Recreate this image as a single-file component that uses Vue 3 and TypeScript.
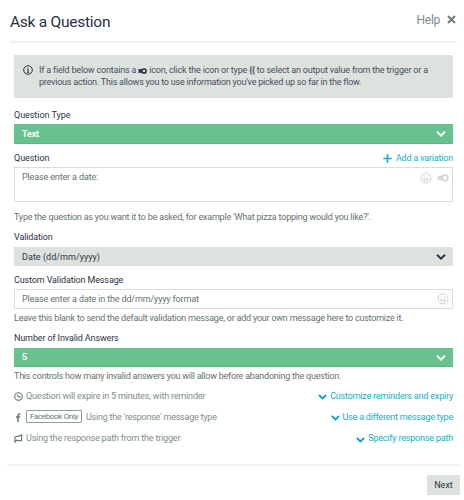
<script setup lang="ts">
interface Option {
  icon: 'clock' | 'facebook' | 'flag'
  badge?: string
  text: string
  link: string
}

const options: Option[] = [
  { icon: 'clock', text: 'Question will expire in 5 minutes, with reminder', link: 'Customize reminders and expiry' },
  { icon: 'facebook', badge: 'Facebook Only', text: "Using the 'response' message type", link: 'Use a different message type' },
  { icon: 'flag', text: 'Using the response path from the trigger', link: 'Specify response path' },
]
</script>

<template>
  <div class="dialog">
    <header class="header">
      <h1 class="title">Ask a Question</h1>
      <span class="help">Help</span>
      <svg class="close" viewBox="0 0 9 9"><path d="M1 1l7 7M8 1l-7 7" /></svg>
    </header>

    <main class="body">
      <section class="info">
        <svg class="info-icon" viewBox="0 0 10 10">
          <circle cx="5" cy="5" r="4.3" /><path d="M4.2 4.4h1v2.9M4 7.3h2.2M5 2.4v1" />
        </svg>
        <div class="info-text">
          <div class="line-one">If a field below contains a <svg class="inline-xo" viewBox="0 0 9 6"><path d="M.6 1.2L3.4 4.8M.6 4.8L3.4 1.2" /><circle cx="6" cy="3" r="2.1" /></svg> icon, click the icon or type <b>{{ '{' + '{' }}</b> to select an output value from the trigger or a</div>
          <div class="line-two">previous action. This allows you to use information you've picked up so far in the flow.</div>
        </div>
      </section>

      <div class="label first"><span class="l-type">Question Type</span></div>
      <div class="select green">
        <span>Text</span>
        <svg class="chevron" viewBox="0 0 10 6"><path d="M1 .8l4 3.8L9 .8" /></svg>
      </div>

      <div class="label question">
        <span class="l-type">Question</span>
        <a class="link add"><svg class="plus" viewBox="0 0 9 9"><path d="M4.5 .3v8.4M.3 4.5h8.4" /></svg><span>Add a variation</span></a>
      </div>
      <div class="field area">
        <span>Please enter a date:</span>
        <div class="tools">
          <svg class="smile" viewBox="0 0 12 12"><circle cx="6" cy="6" r="5" /><path d="M3.3 6.8c.5 2.5 4.9 2.5 5.4 0zM4.3 3.5v1.4M7.7 3.5v1.4" /></svg>
          <svg class="xo" viewBox="0 0 12 8"><path d="M.8 1.7l3.6 4.6M.8 6.3l3.6-4.6" /><circle cx="8" cy="4" r="2.9" /></svg>
        </div>
      </div>
      <div class="hint after-area"><span>Type the question as you want it to be asked, for example 'What pizza topping would you like?'.</span></div>

      <div class="label validation"><span>Validation</span></div>
      <div class="select grey">
        <span>Date (dd/mm/yyyy)</span>
        <svg class="chevron" viewBox="0 0 10 6"><path d="M1 .8l4 3.8L9 .8" /></svg>
      </div>

      <div class="label custom"><span>Custom Validation Message</span></div>
      <div class="field single">
        <span>Please enter a date in the dd/mm/yyyy format</span>
        <svg class="smile" viewBox="0 0 12 12"><circle cx="6" cy="6" r="5" /><path d="M3.3 6.8c.5 2.5 4.9 2.5 5.4 0zM4.3 3.5v1.4M7.7 3.5v1.4" /></svg>
      </div>
      <div class="hint"><span>Leave this blank to send the default validation message, or add your own message here to customize it.</span></div>

      <div class="label number"><span>Number of Invalid Answers</span></div>
      <div class="select green short">
        <span>5</span>
        <svg class="chevron" viewBox="0 0 10 6"><path d="M1 .8l4 3.8L9 .8" /></svg>
      </div>
      <div class="hint"><span class="h-controls">This controls how many invalid answers you will allow before abandoning the question.</span></div>

      <div class="options">
        <div v-for="o in options" :key="o.icon" class="option" :class="o.icon">
          <svg v-if="o.icon === 'clock'" class="option-icon" viewBox="0 0 9 9"><circle cx="4.5" cy="4.5" r="3.8" /><path d="M3 2.8l1.6 2h2" /></svg>
          <svg v-else-if="o.icon === 'facebook'" class="option-icon" viewBox="0 0 9 9"><path d="M6.3 1H5.5C4.3 1 4 1.6 4 2.6V9M2 4h4.1" class="thick" /></svg>
          <svg v-else class="option-icon" viewBox="0 0 9 9"><path d="M.9 8.2V3.1L2.8 2.3l1.1.3L7.6 1v5.6H4.4L2.6 6.2.9 8.2z" /></svg>
          <span v-if="o.badge" class="badge">{{ o.badge }}</span>
          <span class="option-text">{{ o.text }}</span>
          <a class="link"><svg class="chevron" viewBox="0 0 10 6"><path d="M1 .8l4 3.8L9 .8" /></svg><span>{{ o.link }}</span></a>
        </div>
      </div>
    </main>

    <footer class="footer"><button class="next" type="button">Next</button></footer>
  </div>
</template>

<style>
body { margin: 0; background: #fff; }
</style>

<style scoped>
* { box-sizing: border-box; }
svg { fill: none; stroke: currentColor; flex: none; display: block; }
.dialog { width: 464px; height: 500px; background: #fff; font: 9px/12px Roboto, "Liberation Sans", sans-serif; letter-spacing: -0.2px; color: #2c3644; white-space: nowrap; overflow: hidden; }
.header { height: 43px; margin: 0 7px 0 10px; border-bottom: 2px solid #edf1f0; display: flex; align-items: center; color: #7b8c8b; }
.title { margin: 2px auto 0 0; font-size: 15.5px; line-height: 20px; font-weight: 400; letter-spacing: -0.25px; color: #27313f; }
.help { font-size: 12px; margin-right: 7px; margin-top: -2px; letter-spacing: -0.3px; }
.close { width: 9px; height: 9px; stroke-width: 1.9; margin: -3px 1px 0 0; color: #6c7c7b; }
.body { padding: 12px 11px 0 14px; height: 421px; }
.info { height: 43px; padding: 9px 9px 0; background: #dde2df; border-radius: 1px; display: flex; color: #46505e; }
.line-one { letter-spacing: -0.19px; }
.line-two { letter-spacing: -0.22px; }
.info-icon { width: 10px; height: 10px; margin: 1px 6px 0 0; color: #27313f; }
.inline-xo { display: inline-block; width: 9px; height: 6px; stroke-width: 1.5; color: #1f2937; vertical-align: -1px; }
.label { height: 18px; display: flex; align-items: center; justify-content: space-between; letter-spacing: -0.13px; color: #2b3543; }
.l-type { letter-spacing: -0.05px; }
.first { margin-top: 8px; }
.question { margin-top: 5px; }
.validation { margin: 2px 0 1px; }
.custom { margin-top: 5px; }
.number { margin: 2px 0 1px; }
.select { display: flex; align-items: center; justify-content: space-between; padding: 0 7px 0 8px; height: 20px; }
.green { background: #68c18f; color: #fff; font-weight: 700; border-bottom: 1px solid #59b982; }
.grey { background: #dde2df; height: 19px; letter-spacing: 0.04px; }
.short { height: 19px; margin-top: 1px; }
.chevron { width: 10px; height: 6px; stroke-width: 2; margin-top: 1px; }
.link { color: #12b0c9; display: flex; align-items: center; margin-left: auto; letter-spacing: -0.19px; }
.link .chevron { width: 9px; margin: 3px 3px 0 0; color: #0aa3c0; }
.plus { width: 9px; height: 9px; stroke-width: 1.7; margin-right: 4px; }
.field { border: 1px solid #d7dedb; display: flex; justify-content: space-between; padding: 0 3px 0 7px; letter-spacing: -0.14px; color: #65716f; }
.area { height: 35px; padding-top: 3px; }
.tools { display: flex; gap: 5px; align-items: center; height: 13px; }
.smile { width: 12px; height: 12px; color: #cdd4d1; }
.xo { width: 12px; height: 8px; stroke-width: 1.5; color: #cdd4d1; }
.single { height: 20px; align-items: center; }
.hint { height: 18px; display: flex; align-items: center; color: #65716f; letter-spacing: -0.22px; }
.after-area { margin-top: 6px; letter-spacing: -0.2px; }
.h-controls { letter-spacing: -0.23px; }
.options { color: #7e8c8a; }
.option { height: 21px; display: flex; align-items: center; letter-spacing: -0.18px; }
.option.facebook, .facebook .link { letter-spacing: -0.22px; }
.option.flag { height: 22px; }
.option-icon { width: 9px; height: 9px; margin: 1px 3px 0 0; color: #667775; }
.clock .option-icon, .flag .option-icon { stroke-width: 1.15; }
.thick { stroke-width: 1.5; }
.badge { border: 1px solid #909d9b; border-radius: 1px; height: 13px; line-height: 11px; font-size: 8px; padding: 0 3px; margin-right: 4px; letter-spacing: -0.34px; color: #667472; }
.footer { margin: 0 3px 0 7px; border-top: 2px solid #f0f3f1; padding: 9px 1px 0 0; display: flex; justify-content: flex-end; }
.next { border: 0; width: 33px; height: 20px; padding: 0 0 1px; background: #dde2df; color: #2c3644; font: inherit; letter-spacing: 0; }
</style>
